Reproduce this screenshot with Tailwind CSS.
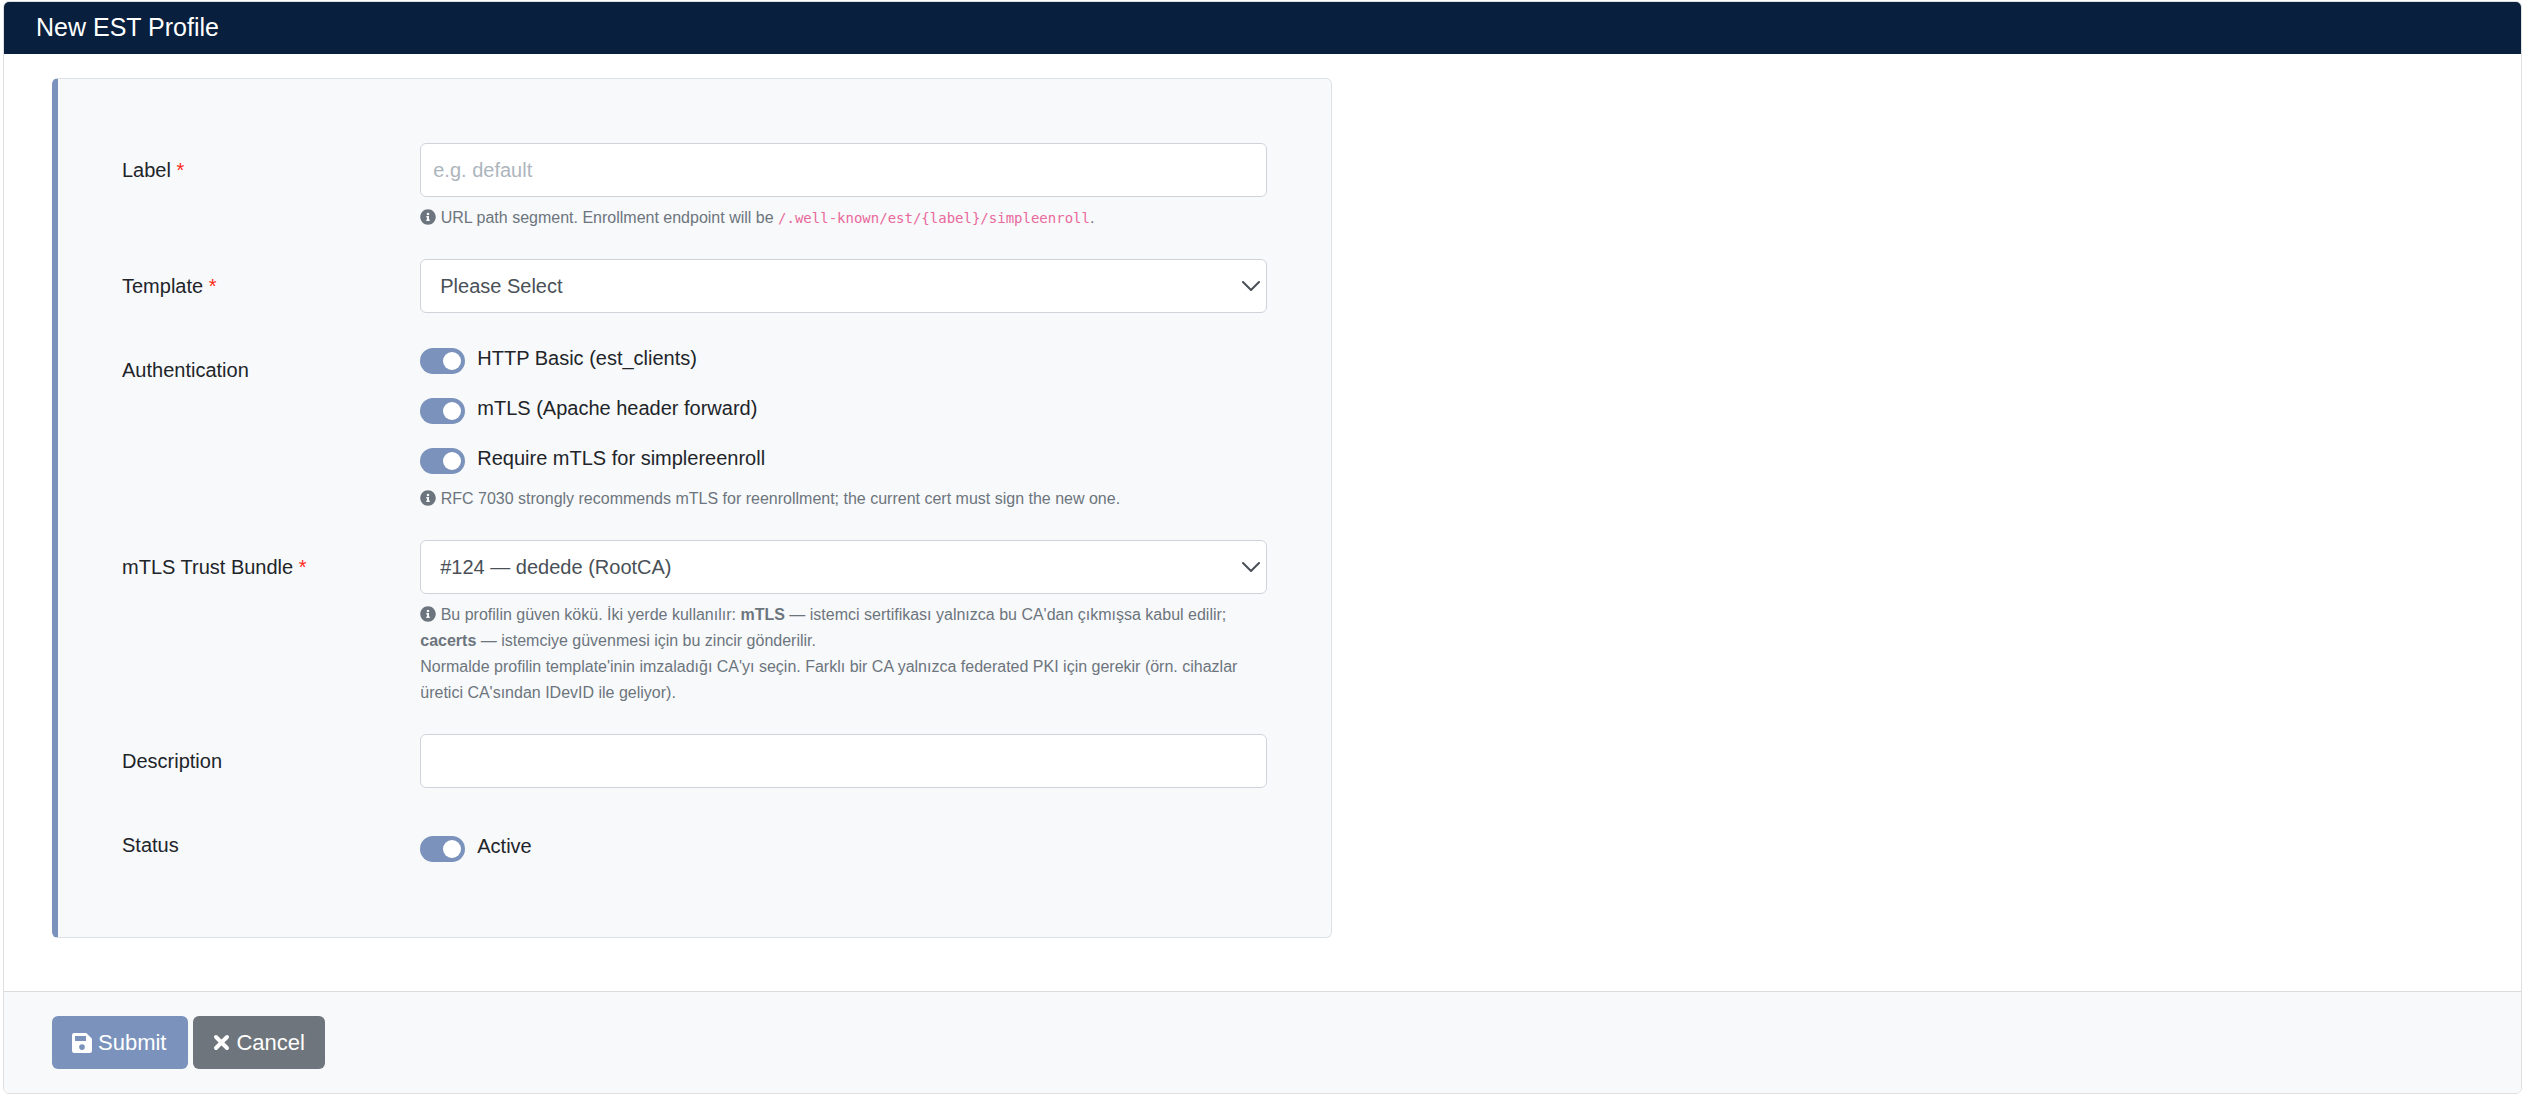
<!DOCTYPE html>
<html lang="en">
<head>
<meta charset="utf-8">
<title>New EST Profile</title>
<meta name="viewport" content="width=device-width, initial-scale=1">
<script src="https://cdn.jsdelivr.net/npm/@tailwindcss/browser@4"></script>
</head>
<body class="bg-white font-['Liberation_Sans',Arial,sans-serif] text-[20px] leading-[30px] text-[#212529]">
<svg class="hidden" aria-hidden="true">
  <symbol id="info" viewBox="0 0 512 512"><path fill="currentColor" d="M256 8C119 8 8 119 8 256s111 248 248 248 248-111 248-248S393 8 256 8zm0 110a42 42 0 1 1 0 84 42 42 0 0 1 0-84zm56 254c0 7-5 12-12 12h-88c-7 0-12-5-12-12v-24c0-7 5-12 12-12h12v-64h-12c-7 0-12-5-12-12v-24c0-7 5-12 12-12h64c7 0 12 5 12 12v100h12c7 0 12 5 12 12v24z"/></symbol>
  <symbol id="chevron" viewBox="0 0 18 10"><path d="M1 1l8 8 8-8" fill="none" stroke="currentColor" stroke-width="2" stroke-linecap="round" stroke-linejoin="round"/></symbol>
</svg>
<form class="mt-px mr-[6px] ml-[3px] overflow-hidden rounded-[6px] border border-[#dfdfdf]">
  <header class="bg-[#081f3d] px-8 pt-[10px] pb-3">
    <h1 class="text-[25px] leading-[30px] text-white">New EST Profile</h1>
  </header>
  <main class="px-12 pt-6 pb-[53px]">
    <section class="flex max-w-[1280px] flex-col gap-[30px] rounded-[6px] border border-l-[6px] border-[#dee2e6] border-l-[#7b93bc] bg-[#f8f9fb] p-16">
      <div class="grid grid-cols-4 gap-12">
        <label for="label" class="py-3">Label <span class="text-[#ff2a1a]">*</span></label>
        <div class="col-span-3">
          <input id="label" type="text" placeholder="e.g. default" class="block h-[54px] w-full rounded-[6px] border border-[#ced4da] bg-white px-3 placeholder:text-[#adb5bd]">
          <p class="-mb-0.5 pt-2 text-[16px] leading-[26px] text-[#6c757d]"><svg class="inline size-4 align-[-2px]"><use href="#info"/></svg> URL path segment. Enrollment endpoint will be <code class="font-['DejaVu_Sans_Mono',monospace] text-[14px] text-[#e8699c]">/.well-known/est/{label}/simpleenroll</code>.</p>
        </div>
      </div>
      <div class="grid grid-cols-4 gap-12">
        <label for="template" class="py-3">Template <span class="text-[#ff2a1a]">*</span></label>
        <div class="relative col-span-3">
          <select id="template" class="block h-[54px] w-full appearance-none rounded-[6px] border border-[#ced4da] bg-white px-[19px] text-[#495057]"><option>Please Select</option></select>
          <svg class="pointer-events-none absolute top-[22px] right-[7px] h-[10px] w-[18px] text-[#495057]"><use href="#chevron"/></svg>
        </div>
      </div>
      <fieldset class="grid grid-cols-4 gap-12">
        <legend class="float-left py-3">Authentication</legend>
        <div class="col-span-3">
          <div class="flex flex-col gap-5">
            <label class="flex h-[30px] gap-3"><input type="checkbox" checked class="mt-[5px] h-[26px] w-[45px] shrink-0 appearance-none rounded-full bg-[#adb5bd] p-1 before:block before:size-[18px] before:rounded-full before:bg-white checked:bg-[#7b93bc] checked:pl-[23px]">HTTP Basic (est_clients)</label>
            <label class="flex h-[30px] gap-3"><input type="checkbox" checked class="mt-[5px] h-[26px] w-[45px] shrink-0 appearance-none rounded-full bg-[#adb5bd] p-1 before:block before:size-[18px] before:rounded-full before:bg-white checked:bg-[#7b93bc] checked:pl-[23px]">mTLS (Apache header forward)</label>
            <label class="flex h-[30px] gap-3"><input type="checkbox" checked class="mt-[5px] h-[26px] w-[45px] shrink-0 appearance-none rounded-full bg-[#adb5bd] p-1 before:block before:size-[18px] before:rounded-full before:bg-white checked:bg-[#7b93bc] checked:pl-[23px]">Require mTLS for simplereenroll</label>
          </div>
          <p class="-mb-0.5 pt-[13px] text-[16px] leading-[26px] text-[#6c757d]"><svg class="inline size-4 align-[-2px]"><use href="#info"/></svg> RFC 7030 strongly recommends mTLS for reenrollment; the current cert must sign the new one.</p>
        </div>
      </fieldset>
      <div class="grid grid-cols-4 gap-12">
        <label for="bundle" class="py-3">mTLS Trust Bundle <span class="text-[#ff2a1a]">*</span></label>
        <div class="relative col-span-3">
          <select id="bundle" class="block h-[54px] w-full appearance-none rounded-[6px] border border-[#ced4da] bg-white px-[19px] text-[#495057]"><option>#124 — dedede (RootCA)</option></select>
          <svg class="pointer-events-none absolute top-[22px] right-[7px] h-[10px] w-[18px] text-[#495057]"><use href="#chevron"/></svg>
          <p lang="tr" class="-mb-0.5 pt-2 text-[16px] leading-[26px] text-[#6c757d]"><svg class="inline size-4 align-[-2px]"><use href="#info"/></svg> Bu profilin güven kökü. İki yerde kullanılır: <strong>mTLS</strong> — istemci sertifikası yalnızca bu CA'dan çıkmışsa kabul edilir; <br><strong>cacerts</strong> — istemciye güvenmesi için bu zincir gönderilir.<br>Normalde profilin template'inin imzaladığı CA'yı seçin. Farklı bir CA yalnızca federated PKI için gerekir (örn. cihazlar <br>üretici CA'sından IDevID ile geliyor).</p>
        </div>
      </div>
      <div class="grid grid-cols-4 gap-12">
        <label for="description" class="py-3">Description</label>
        <input id="description" type="text" class="col-span-3 h-[54px] w-full rounded-[6px] border border-[#ced4da] bg-white px-3">
      </div>
      <div class="grid min-h-[55px] grid-cols-4 gap-12">
        <span class="py-3">Status</span>
        <label class="col-span-3 flex gap-3 pt-[13px]"><input type="checkbox" checked class="mt-[5px] h-[26px] w-[45px] shrink-0 appearance-none rounded-full bg-[#adb5bd] p-1 before:block before:size-[18px] before:rounded-full before:bg-white checked:bg-[#7b93bc] checked:pl-[23px]">Active</label>
      </div>
    </section>
  </main>
  <footer class="flex gap-[5px] border-t border-[#d9dbdd] bg-[#f8f9fb] px-12 py-6 text-[22px] text-white">
    <button type="submit" class="flex h-[53px] items-center gap-[6px] rounded-[6px] bg-[#7b93bc] pr-[22px] pl-5"><svg class="size-5" viewBox="0 0 20 20"><path fill="currentColor" fill-rule="evenodd" d="M2.200 0H14.300L20 5.700V17.800Q20 20 17.800 20H2.200Q0 20 0 17.800V2.200Q0 0 2.200 0ZM3 3V8H14V3ZM10 11.200A2.850 2.850 0 1 0 10 16.900 2.850 2.850 0 0 0 10 11.200Z"/></svg>Submit</button>
    <button type="button" class="flex h-[53px] items-center gap-[6px] rounded-[6px] bg-[#6e757c] px-5"><svg class="size-[17px]" viewBox="0 0 17 17"><path d="M3 3l11 11M14 3L3 14" stroke="currentColor" stroke-width="4" stroke-linecap="round"/></svg>Cancel</button>
  </footer>
</form>
</body>
</html>
